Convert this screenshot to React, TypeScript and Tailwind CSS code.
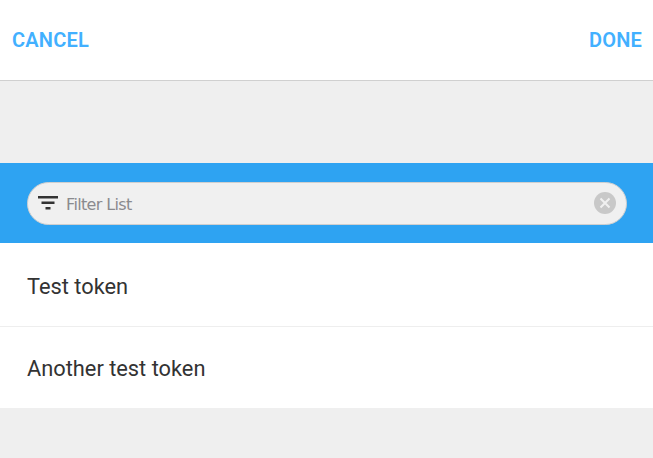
export default function App() {
  return (
    <div className="w-[653px] h-[458px] overflow-hidden bg-[#efefef] flex flex-col font-['Roboto',sans-serif]">
      <div className="h-[81px] shrink-0 bg-white border-b border-[#d0d0d0] flex items-center justify-between pl-3 pr-[11px] text-[20px] font-semibold tracking-[0.2px] text-[#42b0ff]">
        <span>CANCEL</span>
        <span>DONE</span>
      </div>
      <div className="h-[82px] shrink-0" />
      <div className="h-[80px] shrink-0 bg-[#2ea3f2] pl-[27px] pr-[26px] flex items-center">
        <div className="w-full h-[43px] rounded-full bg-[#f0f0f0] border border-[#cfcfcf] flex items-center pl-[10px] pr-[10px]">
          <svg width="20" height="14" viewBox="0 0 20 14" className="shrink-0 mt-[-1px]">
            <rect x="0" y="0" width="20" height="2.5" fill="#333" />
            <rect x="3.5" y="5.5" width="13" height="2.5" fill="#333" />
            <rect x="7.5" y="11" width="5" height="2.5" fill="#333" />
          </svg>
          <span className="ml-2 flex-1 text-[16px] text-[#8a8a8e] font-['DejaVu_Sans',sans-serif] tracking-[-0.65px] pt-[3px]">Filter List</span>
          <svg width="22" height="22" viewBox="0 0 22 22" className="shrink-0">
            <circle cx="11" cy="11" r="11" fill="#c8c8c8" />
            <path d="M6.5 6.5 L15.5 15.5 M15.5 6.5 L6.5 15.5" stroke="#f0f0f0" strokeWidth="2" />
          </svg>
        </div>
      </div>
      <div className="bg-white text-[#333333] text-[21.8px]">
        <div className="h-[84px] border-b border-[#eeeeee] pl-[27px] pt-[5px] flex items-center">Test token</div>
        <div className="h-[81px] pl-[27px] flex items-center pt-[3px]">Another test token</div>
      </div>
    </div>
  );
}
